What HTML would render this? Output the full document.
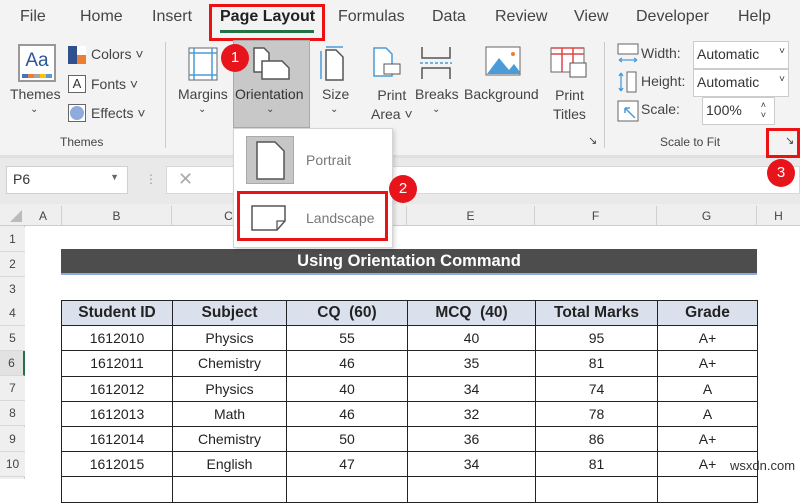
<!DOCTYPE html>
<html><head><style>
*{margin:0;padding:0;box-sizing:border-box}
body{width:800px;height:479px;overflow:hidden;background:#fff;font-family:"Segoe UI","Liberation Sans","DejaVu Sans",sans-serif;position:relative;color:#333}
.a{position:absolute}
.tab{position:absolute;top:8px;font-size:16px;color:#444}
.lbl{position:absolute;font-size:14px;color:#444;text-align:center}
.cal{font-family:"Carlito","Liberation Sans",sans-serif}
.badge{position:absolute;width:28px;height:28px;border-radius:50%;background:#e8141b;color:#fff;font-size:15px;text-align:center;line-height:28px}
.redbox{position:absolute;border:3px solid #e11;}
.ch{position:absolute;top:206px;height:20px;font-size:12px;color:#444;text-align:center;border-right:1px solid #d0d0d0;line-height:20px}
.rh{position:absolute;left:0;width:25px;font-size:12px;color:#444;text-align:center;border-bottom:1px solid #d8d8d8;line-height:25px;height:25px;background:#efefef}
table{position:absolute;left:61px;top:300px;border-collapse:collapse;font-family:"Liberation Sans",sans-serif;font-size:14px}
td{border:1px solid #222;height:25.2px;text-align:center;padding:0;color:#222}
tr.h td{background:#dbe1ec;font-weight:bold;font-size:15.5px}
</style></head><body>
<!-- ribbon bg -->
<div class="a" style="left:0;top:0;width:800px;height:157px;background:#f3f3f3"></div>
<div class="a" style="left:0;top:155px;width:800px;height:3px;background:#e0e0e0"></div>
<div class="tab" style="left:20px">File</div>
<div class="tab" style="left:80px">Home</div>
<div class="tab" style="left:152px">Insert</div>
<div class="tab" style="left:220px;color:#222;font-weight:bold">Page Layout</div>
<div class="a" style="left:220px;top:30px;width:94px;height:3px;background:#217346"></div>
<div class="tab" style="left:338px">Formulas</div>
<div class="tab" style="left:432px">Data</div>
<div class="tab" style="left:495px">Review</div>
<div class="tab" style="left:574px">View</div>
<div class="tab" style="left:636px">Developer</div>
<div class="tab" style="left:738px">Help</div>
<div class="redbox" style="left:209px;top:4px;width:116px;height:37px"></div>

<!-- Themes group -->
<div class="a" style="left:18px;top:44px;width:38px;height:38px;border:2px solid #999;background:#fff;font-size:19px;text-align:center;line-height:30px;color:#2b5797">Aa</div>
<div class="a" style="left:22px;top:74px;width:30px;height:4px;background:linear-gradient(90deg,#4472c4 20%,#ed7d31 20% 40%,#a5a5a5 40% 60%,#ffc000 60% 80%,#5b9bd5 80%)"></div>
<div class="lbl" style="left:10px;top:86px">Themes</div>
<div class="lbl" style="left:30px;top:104px;font-size:10px">⌄</div>
<div class="a" style="left:68px;top:46px;width:18px;height:18px;background:linear-gradient(90deg,#2f4f8f 50%,#fff 50%)"></div>
<div class="a" style="left:77px;top:55px;width:9px;height:9px;background:#ed7d31"></div>
<div class="lbl" style="left:91px;top:46px">Colors ˅</div>
<div class="a" style="left:68px;top:75px;width:18px;height:18px;border:1px solid #666;background:#fff;font-size:13px;text-align:center;line-height:16px">A</div>
<div class="lbl" style="left:91px;top:76px">Fonts ˅</div>
<div class="a" style="left:68px;top:104px;width:18px;height:18px;border:1px solid #666;background:#fff"></div>
<div class="a" style="left:70px;top:106px;width:14px;height:14px;border-radius:50%;background:#8faadc"></div>
<div class="lbl" style="left:91px;top:105px">Effects ˅</div>
<div class="lbl" style="left:60px;top:135px;font-size:12px">Themes</div>
<div class="a" style="left:165px;top:42px;width:1px;height:106px;background:#ccc"></div>

<!-- Page setup -->
<svg class="a" style="left:188px;top:47px" width="30" height="34"><rect x="1" y="1" width="28" height="32" fill="#fff" stroke="#666"/><path d="M6 1V33M24 1V33M1 6H29M1 28H29" stroke="#4a9bd8" stroke-width="1.5"/></svg>
<div class="lbl" style="left:178px;top:86px">Margins</div>
<div class="lbl" style="left:198px;top:104px;font-size:10px">⌄</div>
<div class="a" style="left:233px;top:40px;width:77px;height:88px;background:#c8c8c8;border:1px solid #aaa"></div>
<svg class="a" style="left:252px;top:46px" width="40" height="36"><path d="M2 2H12L17 7V26H2Z" fill="#fff" stroke="#555" stroke-width="1.5"/><path d="M10 15H30L37 22V33H10Z" fill="#fff" stroke="#555" stroke-width="1.5"/></svg>
<div class="lbl" style="left:235px;top:86px;color:#333">Orientation</div>
<div class="lbl" style="left:266px;top:104px;font-size:10px">⌄</div>
<svg class="a" style="left:318px;top:46px" width="30" height="36"><path d="M8 4H18L25 11V34H8Z" fill="#fff" stroke="#555" stroke-width="1.5"/><path d="M3 5V33M8 1H25" stroke="#4a9bd8" stroke-width="1.5"/></svg>
<div class="lbl" style="left:322px;top:86px">Size</div>
<div class="lbl" style="left:330px;top:104px;font-size:10px">⌄</div>
<svg class="a" style="left:372px;top:46px" width="30" height="36"><path d="M2 2H14L20 8V30H2Z" fill="#fff" stroke="#4a9bd8" stroke-width="1.5"/><rect x="12" y="18" width="16" height="10" fill="#fff" stroke="#555"/></svg>
<div class="lbl" style="left:371px;top:86px;line-height:19px">Print<br>Area ˅</div>
<svg class="a" style="left:418px;top:46px" width="36" height="34"><path d="M4 1V12H32V1M4 33V22H32V33" fill="none" stroke="#555" stroke-width="1.5"/><path d="M2 17H34" stroke="#4a9bd8" stroke-dasharray="3 2" stroke-width="1.5"/></svg>
<div class="lbl" style="left:415px;top:86px">Breaks</div>
<div class="lbl" style="left:432px;top:104px;font-size:10px">⌄</div>
<svg class="a" style="left:485px;top:46px" width="36" height="34"><rect x="1" y="1" width="34" height="28" fill="#fff" stroke="#666"/><path d="M2 28L14 12L24 24L29 18L35 26V28Z" fill="#4a9bd8"/><circle cx="28" cy="8" r="2" fill="#ed7d31"/></svg>
<div class="lbl" style="left:464px;top:86px">Background</div>
<svg class="a" style="left:550px;top:47px" width="38" height="34"><rect x="1" y="1" width="33" height="24" fill="#fff" stroke="#666"/><path d="M1 1H34M1 7H34M12 1V25M23 1V25" stroke="#e04545" stroke-width="1.5"/><rect x="20" y="16" width="16" height="14" fill="#fff" stroke="#555"/></svg>
<div class="lbl" style="left:553px;top:86px;line-height:19px">Print<br>Titles</div>
<div class="lbl" style="left:588px;top:134px;font-size:11px">↘</div>
<div class="a" style="left:604px;top:42px;width:1px;height:106px;background:#ccc"></div>

<!-- Scale to fit -->
<svg class="a" style="left:617px;top:43px" width="22" height="22"><rect x="1" y="1" width="20" height="10" fill="#fff" stroke="#666"/><path d="M2 17H20M2 17l3-2M2 17l3 2M20 17l-3-2M20 17l-3 2" stroke="#4a9bd8" stroke-width="1.3" fill="none"/></svg>
<div class="lbl" style="left:641px;top:45px">Width:</div>
<div class="a" style="left:693px;top:41px;width:96px;height:28px;background:#fff;border:1px solid #ccc;font-size:14px;padding:4px 3px;color:#333">Automatic<span style="float:right;font-size:10px">˅</span></div>
<svg class="a" style="left:617px;top:71px" width="22" height="22"><rect x="10" y="1" width="9" height="20" fill="#fff" stroke="#666"/><path d="M4 2V20M4 2l-2 3M4 2l2 3M4 20l-2-3M4 20l2-3" stroke="#4a9bd8" stroke-width="1.3" fill="none"/></svg>
<div class="lbl" style="left:641px;top:73px">Height:</div>
<div class="a" style="left:693px;top:69px;width:96px;height:28px;background:#fff;border:1px solid #ccc;font-size:14px;padding:4px 3px;color:#333">Automatic<span style="float:right;font-size:10px">˅</span></div>
<svg class="a" style="left:617px;top:100px" width="22" height="22"><rect x="1" y="1" width="20" height="20" fill="#fff" stroke="#666"/><path d="M8 8L18 18M8 8H13M8 8V13" stroke="#4a9bd8" stroke-width="1.5" fill="none"/></svg>
<div class="lbl" style="left:641px;top:101px">Scale:</div>
<div class="a" style="left:702px;top:97px;width:73px;height:28px;background:#fff;border:1px solid #ccc;font-size:14px;padding:4px 3px;color:#333">100%<span style="position:absolute;right:8px;top:2px;font-size:9px;line-height:10px">˄<br>˅</span></div>
<div class="lbl" style="left:660px;top:135px;font-size:12px">Scale to Fit</div>
<div class="lbl" style="left:785px;top:134px;font-size:11px">↘</div>
<div class="redbox" style="left:766px;top:128px;width:34px;height:30px"></div>

<!-- formula bar -->
<div class="a" style="left:0;top:158px;width:800px;height:46px;background:#e9e9e9"></div>
<div class="a" style="left:6px;top:166px;width:122px;height:28px;background:#fff;border:1px solid #d0d0d0;font-size:14px;padding:4px 6px">P6<span style="position:absolute;right:8px;top:5px;font-size:9px;color:#666">▼</span></div>
<div class="a" style="left:145px;top:172px;font-size:12px;color:#999">⋮</div>
<div class="a" style="left:166px;top:166px;width:634px;height:28px;background:#fff;border:1px solid #d8d8d8"></div>
<div class="a" style="left:178px;top:169px;font-size:18px;color:#aaa">✕</div>

<!-- column headers -->
<div class="a" style="left:0;top:204px;width:800px;height:22px;background:#efefef;border-bottom:1px solid #ccc"></div>
<div class="a" style="left:10px;top:210px;width:0;height:0;border-left:12px solid transparent;border-bottom:12px solid #bbb"></div>
<div class="ch" style="left:25px;width:37px">A</div>
<div class="ch" style="left:62px;width:110px">B</div>
<div class="ch" style="left:172px;width:114px">C</div>
<div class="ch" style="left:286px;width:121px">D</div>
<div class="ch" style="left:407px;width:128px">E</div>
<div class="ch" style="left:535px;width:122px">F</div>
<div class="ch" style="left:657px;width:100px">G</div>
<div class="ch" style="left:757px;width:43px;border:none">H</div>
<div class="a" style="left:0;top:226px;width:25px;height:253px;background:#efefef;border-right:1px solid #ccc"></div>
<div class="rh" style="top:227px">1</div>
<div class="rh" style="top:252px">2</div>
<div class="rh" style="top:277px">3</div>
<div class="rh" style="top:301px">4</div>
<div class="rh" style="top:326px">5</div>
<div class="rh" style="top:351px;background:#e2e2e2;border-right:2px solid #217346">6</div>
<div class="rh" style="top:376px">7</div>
<div class="rh" style="top:401px">8</div>
<div class="rh" style="top:427px">9</div>
<div class="rh" style="top:452px">10</div>

<!-- title -->
<div class="a" style="left:61px;top:249px;width:696px;height:24px;background:#4d4d4d;color:#fff;font-weight:bold;font-size:16.5px;text-align:center;line-height:24px;font-family:'Liberation Sans',sans-serif">Using Orientation Command</div>
<div class="a" style="left:61px;top:273px;width:696px;height:2px;background:#8ea9db"></div>

<table>
<colgroup><col style="width:111px"><col style="width:114px"><col style="width:121px"><col style="width:128px"><col style="width:122px"><col style="width:100px"></colgroup>
<tr class="h"><td>Student ID</td><td>Subject</td><td>CQ &nbsp;(60)</td><td>MCQ &nbsp;(40)</td><td>Total Marks</td><td>Grade</td></tr>
<tr><td>1612010</td><td>Physics</td><td>55</td><td>40</td><td>95</td><td>A+</td></tr>
<tr><td>1612011</td><td>Chemistry</td><td>46</td><td>35</td><td>81</td><td>A+</td></tr>
<tr><td>1612012</td><td>Physics</td><td>40</td><td>34</td><td>74</td><td>A</td></tr>
<tr><td>1612013</td><td>Math</td><td>46</td><td>32</td><td>78</td><td>A</td></tr>
<tr><td>1612014</td><td>Chemistry</td><td>50</td><td>36</td><td>86</td><td>A+</td></tr>
<tr><td>1612015</td><td>English</td><td>47</td><td>34</td><td>81</td><td>A+</td></tr>
<tr><td>&nbsp;</td><td></td><td></td><td></td><td></td><td></td></tr>
</table>
<div class="a" style="left:730px;top:458px;font-size:13px;color:#333">wsxdn.com</div>

<!-- dropdown -->
<div class="a" style="left:233px;top:128px;width:160px;height:120px;background:#fff;border:1px solid #d4d4d4;box-shadow:2px 2px 4px rgba(0,0,0,.15)"></div>
<div class="a" style="left:246px;top:136px;width:48px;height:48px;background:#c6c6c6;border:1px solid #aaa"></div>
<svg class="a" style="left:256px;top:141px" width="30" height="40"><path d="M1 1H19L28 10V38H1Z" fill="#fff" stroke="#555" stroke-width="1.5"/></svg>
<div class="a" style="left:306px;top:152px;font-size:14px;color:#777">Portrait</div>
<svg class="a" style="left:251px;top:205px" width="40" height="28"><path d="M1 1H34V16L26 25H1Z" fill="#fff" stroke="#555" stroke-width="1.5"/><path d="M34 16L26 16V25" fill="none" stroke="#555" stroke-width="1.3"/></svg>
<div class="a" style="left:306px;top:210px;font-size:14px;color:#777">Landscape</div>
<div class="redbox" style="left:237px;top:191px;width:151px;height:50px"></div>

<div class="badge" style="left:221px;top:44px">1</div>
<div class="badge" style="left:389px;top:175px">2</div>
<div class="badge" style="left:767px;top:159px">3</div>
</body></html>
